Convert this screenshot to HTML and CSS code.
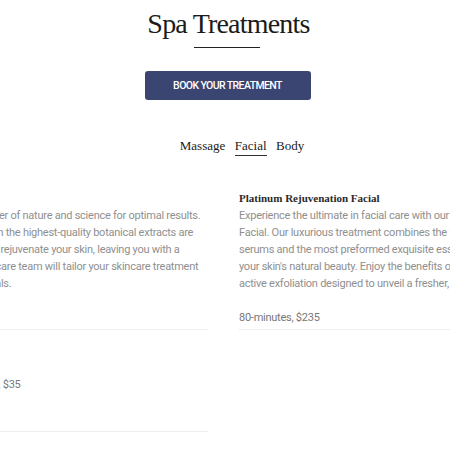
FILE: index.html
```html
<!DOCTYPE html>
<html lang="en">
<head>
  <meta charset="UTF-8" />
  <meta name="viewport" content="width=device-width, initial-scale=1.0" />
  <title>Spa Treatments</title>
  <link rel="stylesheet" href="styles.css">
</head>
<body>
  <main class="spa">
    <!-- ----------  HEADER  ---------- -->
    <header class="spa-head">
      <h1>Spa Treatments</h1>
      <span class="rule"></span>
      <a class="book-btn" href="#">Book your treatment</a>
    </header>

    <!-- ----------  TABS  ---------- -->
    <ul class="tabs">
      <li>Massage</li>
      <li class="active">Facial</li>
      <li>Body</li>
    </ul>

    <!-- ----------  MENU  ---------- -->
    <div class="menu">
      <div class="col">
        <div class="item">
          <h3>Signature Facial</h3>
          <p>Our facial harnesses the power of nature and science for optimal results.<br>
          Pure ingredients together with the highest-quality botanical extracts are<br>
          used to cleanse, hydrate, and rejuvenate your skin, leaving you with a<br>
          radiant glow. Our expert skincare team will tailor your skincare treatment<br>
          to your unique needs and goals.</p>
          <span class="price">50-minutes, $145</span>
        </div>
        <div class="item item-short">
          <h3>Eye Treatment</h3>
          <span class="price">Add to any facial, 15-minutes, $35</span>
        </div>
      </div>

      <div class="col">
        <div class="item">
          <h3>Platinum Rejuvenation Facial</h3>
          <p>Experience the ultimate in facial care with our Platinum Rejuvenation<br>
          Facial. Our luxurious treatment combines the finest anti-aging<br>
          serums and the most preformed exquisite essential oils to enhance<br>
          your skin's natural beauty. Enjoy the benefits of deep hydration and<br>
          active exfoliation designed to unveil a fresher, more youthful you.</p>
          <span class="price">80-minutes, $235</span>
        </div>
      </div>
    </div>
  </main>
</body>
</html>
```

FILE: styles.css
```css
/* —————— RESET —————— */
*{margin:0;padding:0;box-sizing:border-box;}

body{
  background:#fff;
  color:#222;
  overflow:hidden;
  font-family:"Roboto","Liberation Sans",sans-serif;
}

/* —————— LAYOUT —————— */
.spa{
  display:flex;
  flex-direction:column;
  align-items:center;
}

.spa-head{
  display:flex;
  flex-direction:column;
  align-items:center;
  padding-left:5px;
}
.spa-head h1{
  margin-top:6px;
  padding-left:2px;
  font-family:"Liberation Serif",serif;
  font-weight:normal;
  font-size:28px;
  line-height:36px;
  letter-spacing:-0.8px;
  color:#1b1b1b;
}
.rule{
  display:block;
  width:66px;
  height:1px;
  margin-top:5px;
  margin-right:2px;
  background:#222;
}
.book-btn{
  display:flex;
  align-items:center;
  justify-content:center;
  width:166px;
  height:29px;
  margin-top:23px;
  border-radius:3px;
  background:#3b4571;
  color:#fff;
  font-size:10.5px;
  font-weight:500;
  letter-spacing:-0.6px;
  text-transform:uppercase;
  text-decoration:none;
}

/* —————— TABS —————— */
.tabs{
  display:flex;
  gap:9.5px;
  margin-top:38px;
  padding-left:34px;
  list-style:none;
  font-family:"Liberation Serif",serif;
  font-size:13px;
  color:#1b1b1b;
}
.tabs li{padding-bottom:1px;border-bottom:1px solid transparent;}
.tabs .active{border-bottom-color:#333;}

/* —————— MENU —————— */
.menu{
  display:grid;
  grid-template-columns:344px 340px;
  gap:31px;
  margin-top:22px;
  margin-right:7px;
}
.item{
  padding:12px 0 3px;
  border-bottom:1px solid #eee;
}
.item h3{
  font-family:"Liberation Serif",serif;
  font-size:11px;
  font-weight:bold;
  line-height:17px;
  color:#2a2a2a;
}
.item p,
.price{
  font-size:11px;
  line-height:17px;
  letter-spacing:-0.25px;
  color:#8f8f8f;
  white-space:nowrap;
}
.price{
  display:block;
  margin-top:17px;
  color:#777;
}
.item-short{padding-bottom:38px;}
```
